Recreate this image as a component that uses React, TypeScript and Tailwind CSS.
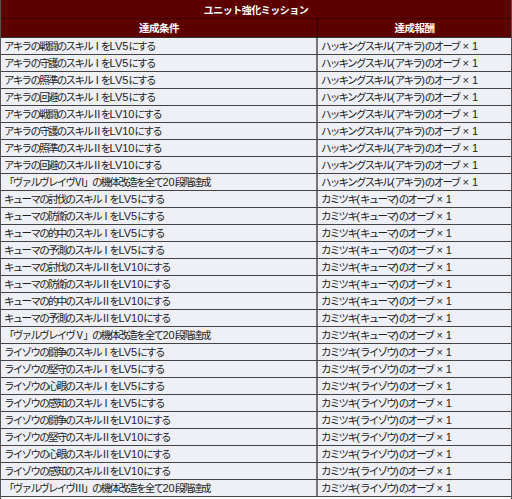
import React from "react";

type Row = { cond: string; reward: string };

const groups: { name: string; skills: string[]; unit: string; reward: string }[] = [
  {
    name: "アキラ",
    skills: ["戦闘", "守護", "照準", "回避"],
    unit: "Ⅵ",
    reward: "ハッキングスキル(アキラ)のオーブ × 1",
  },
  {
    name: "キューマ",
    skills: ["討伐", "防衛", "的中", "予測"],
    unit: "Ⅴ",
    reward: "カミツキ(キューマ)のオーブ × 1",
  },
  {
    name: "ライゾウ",
    skills: ["闘争", "堅守", "心眼", "感知"],
    unit: "Ⅲ",
    reward: "カミツキ(ライゾウ)のオーブ × 1",
  },
];

const rows: Row[] = groups.flatMap((g) => [
  ...g.skills.map((s) => ({ cond: `${g.name}の${s}のスキルⅠをLV5にする`, reward: g.reward })),
  ...g.skills.map((s) => ({ cond: `${g.name}の${s}のスキルⅡをLV10にする`, reward: g.reward })),
  { cond: `「ヴァルヴレイヴ${g.unit}」の機体改造を全て20段階達成`, reward: g.reward },
]);

// latin runs keep normal spacing, japanese runs are tightened
const Txt = ({ s }: { s: string }) => {
  const parts = s.split(/([A-Za-z0-9()× ]+)/).filter(Boolean);
  return (
    <>
      {parts.map((p, i) =>
        /^[A-Za-z0-9()× ]+$/.test(p) ? (
          <span
            key={i}
            className="tracking-normal text-[11px] whitespace-pre"
            style={{ fontFamily: '"Liberation Sans", sans-serif' }}
          >
            {p}
          </span>
        ) : (
          <span key={i} className="tracking-[-1.7px]">
            {p}
          </span>
        )
      )}
    </>
  );
};

const App = () => {
  return (
    <div
      className="w-[512px] h-[499px] bg-white border-l border-r border-[#555] overflow-hidden text-[#222]"
      style={{ fontFamily: '"Noto Sans CJK JP", sans-serif' }}
    >
      <div className="h-[19px] bg-[#5c0000] border-b border-[#3a0000] flex items-center justify-center text-white text-[10px] font-bold tracking-[-0.5px]">
        ユニット強化ミッション
      </div>
      <div className="grid grid-cols-[317px_1fr] h-[19px] bg-[#5c0000] border-b border-[#333] text-white text-[10.5px] font-bold tracking-[-0.5px]">
        <div className="flex items-center justify-center border-r border-[#2a0000]">達成条件</div>
        <div className="flex items-center justify-center">達成報酬</div>
      </div>
      {rows.map((r, i) => (
        <div
          key={i}
          className="grid grid-cols-[317px_1fr] h-[17px] bg-[#eef0f6] border-b border-[#444] text-[10.5px] leading-none"
        >
          <div className="flex items-center pl-[3px] border-r-2 border-[#777] whitespace-nowrap">
            <Txt s={r.cond} />
          </div>
          <div className="flex items-center pl-[3px] whitespace-nowrap">
            <Txt s={r.reward} />
          </div>
        </div>
      ))}
    </div>
  );
};

export default App;
